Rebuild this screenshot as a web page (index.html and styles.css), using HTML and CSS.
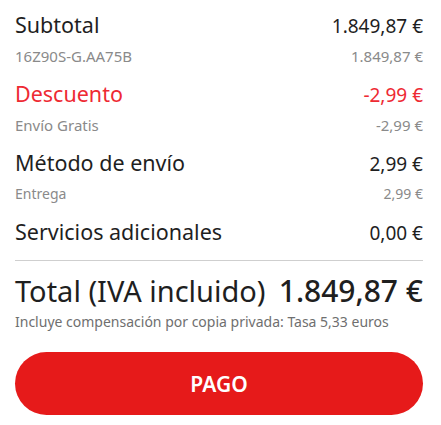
FILE: index.html
```html
<!DOCTYPE html>
<html lang="es">
<head>
  <meta charset="UTF-8" />
  <meta name="viewport" content="width=device-width, initial-scale=1.0" />
  <title>Resumen del pedido</title>
  <link rel="stylesheet" href="styles.css">
</head>
<body>
  <div class="summary">
    <div class="group">
      <div class="row main">
        <span>Subtotal</span>
        <span class="price">1.849,87 €</span>
      </div>
      <div class="row sub">
        <span>16Z90S-G.AA75B</span>
        <span>1.849,87 €</span>
      </div>
    </div>

    <div class="group">
      <div class="row main discount">
        <span>Descuento</span>
        <span class="price">-2,99 €</span>
      </div>
      <div class="row sub">
        <span>Envío Gratis</span>
        <span>-2,99 €</span>
      </div>
    </div>

    <div class="group">
      <div class="row main">
        <span>Método de envío</span>
        <span class="price">2,99 €</span>
      </div>
      <div class="row sub small">
        <span>Entrega</span>
        <span>2,99 €</span>
      </div>
    </div>

    <div class="group last">
      <div class="row main">
        <span>Servicios adicionales</span>
        <span class="price">0,00 €</span>
      </div>
    </div>

    <div class="total">
      <div class="row total-row">
        <span>Total (IVA incluido)</span>
        <span class="total-price">1.849,87 €</span>
      </div>
      <p class="note">Incluye compensación por copia privada: Tasa 5,33 euros</p>
    </div>

    <button type="button" class="pay">PAGO</button>
  </div>
</body>
</html>
```

FILE: styles.css
```css
body {
  margin: 0;
  background-color: #ffffff;
  font-family: "Noto Sans", "Open Sans", sans-serif;
  color: #1f1f1f;
}
.summary {
  padding: 11px 18px 0 15px;
}
.row {
  display: flex;
  justify-content: space-between;
  align-items: baseline;
}
.group {
  margin-bottom: 14px;
}
.group.last {
  margin-bottom: 0;
  padding-bottom: 13px;
  border-bottom: 1px solid #cfcfcf;
}
.main {
  font-size: 21.5px;
  line-height: 28px;
}
.main .price {
  font-size: 19px;
}
.sub {
  margin-top: 6px;
  font-size: 15px;
  line-height: 20px;
  color: #8a8a8a;
}
.sub.small {
  font-size: 14px;
}
.discount {
  color: #ee2a33;
}
.total {
  margin-top: 12px;
}
.total-row {
  font-size: 29px;
  line-height: 36px;
}
.total-price {
  font-size: 30px;
  font-weight: 500;
}
.note {
  margin: 4px 0 0;
  font-size: 14px;
  line-height: 18px;
  color: #6f6f6f;
}
.pay {
  display: block;
  width: 100%;
  height: 63px;
  margin-top: 21px;
  border: none;
  border-radius: 32px;
  background-color: #e61a1a;
  color: #ffffff;
  font-family: inherit;
  font-size: 21px;
  font-weight: 600;
  cursor: pointer;
}
```
